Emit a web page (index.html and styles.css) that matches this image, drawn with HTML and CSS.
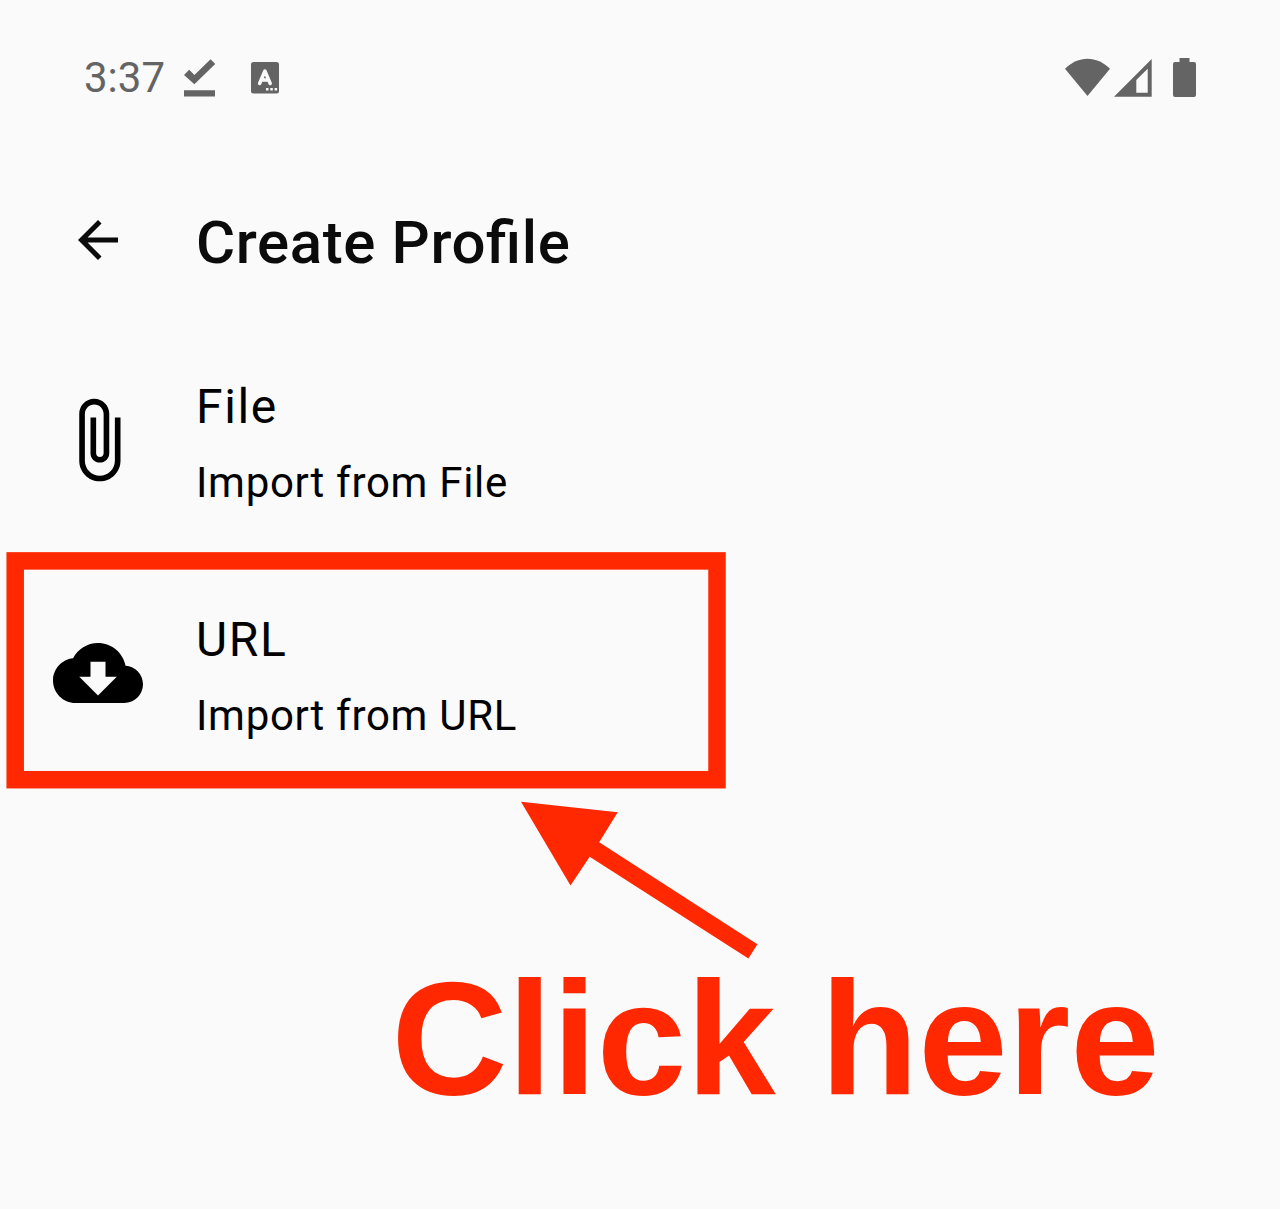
FILE: index.html
```html
<!DOCTYPE html>
<html lang="en">
<head>
<meta charset="utf-8">
<title>Create Profile</title>
<link rel="stylesheet" href="styles.css">
</head>
<body>
<div class="screen">
  <header class="status">
    <div class="status-left">
      <span class="clock">3:37</span>
      <svg class="done-icon" viewBox="0 0 32 40" aria-hidden="true"><path d="M0 32.200h31v6.300H0zM0 17l5.200-5.300 5.200 5.200L26.600 1.200l4.600 4.800L10.400 26.200z"/></svg>
      <svg class="keyboard-icon" viewBox="0 0 28 32" aria-hidden="true"><rect width="28" height="31.500" rx="2.500"/><path class="mark" d="M8.600 21.500 13.900 9 19.200 21.500M10.600 18h6.600"/><path class="dots" d="M15 26h2.500v2.500H15zM19.300 26h2.500v2.500h-2.500zM23.600 26h2.500v2.500h-2.500z"/></svg>
    </div>
    <div class="status-right">
      <svg class="wifi-icon" viewBox="0 0 45 38" aria-hidden="true"><path d="M0 10.700C13-2.700 32-2.700 45 10.700L22.500 38z"/></svg>
      <svg class="signal-icon" viewBox="0 0 38 38" aria-hidden="true"><path fill-rule="evenodd" d="M0 37.700 37.700 0v37.700zM22.300 21v12.800h11.400V9.700z"/></svg>
      <svg class="battery-icon" viewBox="0 0 23 39" aria-hidden="true"><path d="M6.500 0h10v4H21q2 0 2 2v31q0 2-2 2H2q-2 0-2-2V6q0-2 2-2h4.500z"/></svg>
    </div>
  </header>
  <div class="toolbar">
    <svg class="back-icon" viewBox="0 0 24 24" aria-hidden="true"><path d="M20 11H7.830l5.590-5.590L12 4l-8 8 8 8 1.410-1.410L7.830 13H20v-2z"/></svg>
    <h1 class="title">Create Profile</h1>
  </div>
  <main class="options">
    <div class="option">
      <svg class="option-icon" viewBox="0 0 24 24" aria-hidden="true"><path d="M16.500 6v11.500c0 2.210-1.790 4-4 4s-4-1.790-4-4V5c0-1.380 1.120-2.500 2.500-2.500s2.500 1.120 2.500 2.500v10.500c0 .55-.45 1-1 1s-1-.45-1-1V6H10v9.500c0 1.380 1.120 2.500 2.500 2.500s2.500-1.120 2.500-2.500V5c0-2.210-1.790-4-4-4S7 2.790 7 5v12.500c0 3.040 2.460 5.500 5.500 5.500s5.500-2.460 5.500-5.500V6h-1.500z"/></svg>
      <div class="option-text"><span class="name">File</span><span class="detail">Import from File</span></div>
    </div>
    <div class="option">
      <svg class="option-icon" viewBox="0 0 24 24" aria-hidden="true"><path d="M19.350 10.040C18.670 6.590 15.640 4 12 4 9.110 4 6.600 5.640 5.350 8.040 2.340 8.360 0 10.910 0 14c0 3.310 2.690 6 6 6h13c2.760 0 5-2.240 5-5 0-2.640-2.050-4.780-4.650-4.960zM17 13l-5 5-5-5h3V9h4v4h3z"/></svg>
      <div class="option-text"><span class="name">URL</span><span class="detail">Import from URL</span></div>
    </div>
  </main>
  <svg class="highlight" viewBox="0 0 722 238" aria-hidden="true"><rect x="9.200" y="8.900" width="701.800" height="218.800"/></svg>
  <svg class="pointer" viewBox="0 0 238 158" aria-hidden="true"><path d="M0-.3 96.700 10.300 78.200 40.200 236.400 142.200 227.400 156.500 68.700 54.700 49.500 83.500z"/></svg>
  <div class="callout">Click here</div>
</div>
</body>
</html>
```
FILE: styles.css
```css
* { box-sizing: border-box; }

body {
  margin: 0;
  background: #fafafa;
  font-family: Roboto, sans-serif;
  color: #000;
}

svg { display: block; flex: none; }

.screen {
  position: relative;
  height: 1209px;
  overflow: hidden;
}

.status {
  display: flex;
  justify-content: space-between;
  height: 156px;
  padding: 58px 84px 0;
  color: #646464;
  fill: #646464;
}

.status-left, .status-right { display: flex; align-items: flex-start; }

.clock {
  width: 100px;
  font-size: 42px;
  line-height: 40px;
}

.done-icon { width: 32px; height: 40px; }
.keyboard-icon { width: 28px; height: 32px; margin: 4px 0 0 35px; }
.mark { fill: none; stroke: #fafafa; stroke-width: 3.500px; stroke-linejoin: round; stroke-linecap: round; }
.dots { fill: #fafafa; }
.wifi-icon { width: 45px; height: 38px; }
.signal-icon { width: 38px; height: 38px; margin: 1px 0 0 4px; }
.battery-icon { width: 23px; height: 39px; margin-left: 21px; }

.toolbar {
  display: flex;
  align-items: center;
  height: 168px;
  padding-left: 68px;
}

.back-icon { width: 60px; height: 60px; fill: #0b0b0b; }

.title {
  margin: 6px 0 0 68px;
  font-size: 60px;
  font-weight: 500;
  line-height: 70px;
  letter-spacing: 0.600px;
  font-feature-settings: "liga" 1;
  color: #0b0b0b;
}

.options { display: flex; flex-direction: column; margin-top: -1px; }

.option {
  display: flex;
  align-items: center;
  gap: 53px;
  height: 233px;
  padding-left: 53px;
}

.option-icon { width: 90px; height: 90px; }
.option-text { display: flex; flex-direction: column; gap: 20px; margin-top: 10px; }
.name { font-size: 48px; line-height: 56px; letter-spacing: 1.600px; }
.detail { font-size: 42px; line-height: 56px; letter-spacing: 0.700px; }

.highlight {
  position: absolute;
  left: 6px;
  top: 552px;
  width: 722px;
  height: 238px;
  fill: none;
  stroke: #ff2800;
  stroke-width: 17.500px;
}

.pointer {
  position: absolute;
  left: 521px;
  top: 802px;
  width: 238px;
  height: 158px;
  overflow: visible;
  fill: #ff2800;
}

.callout {
  position: absolute;
  left: 391.500px;
  top: 947px;
  font: bold 160.700px/184px "Liberation Sans", Arial, sans-serif;
  white-space: nowrap;
  color: #ff2800;
}
```
